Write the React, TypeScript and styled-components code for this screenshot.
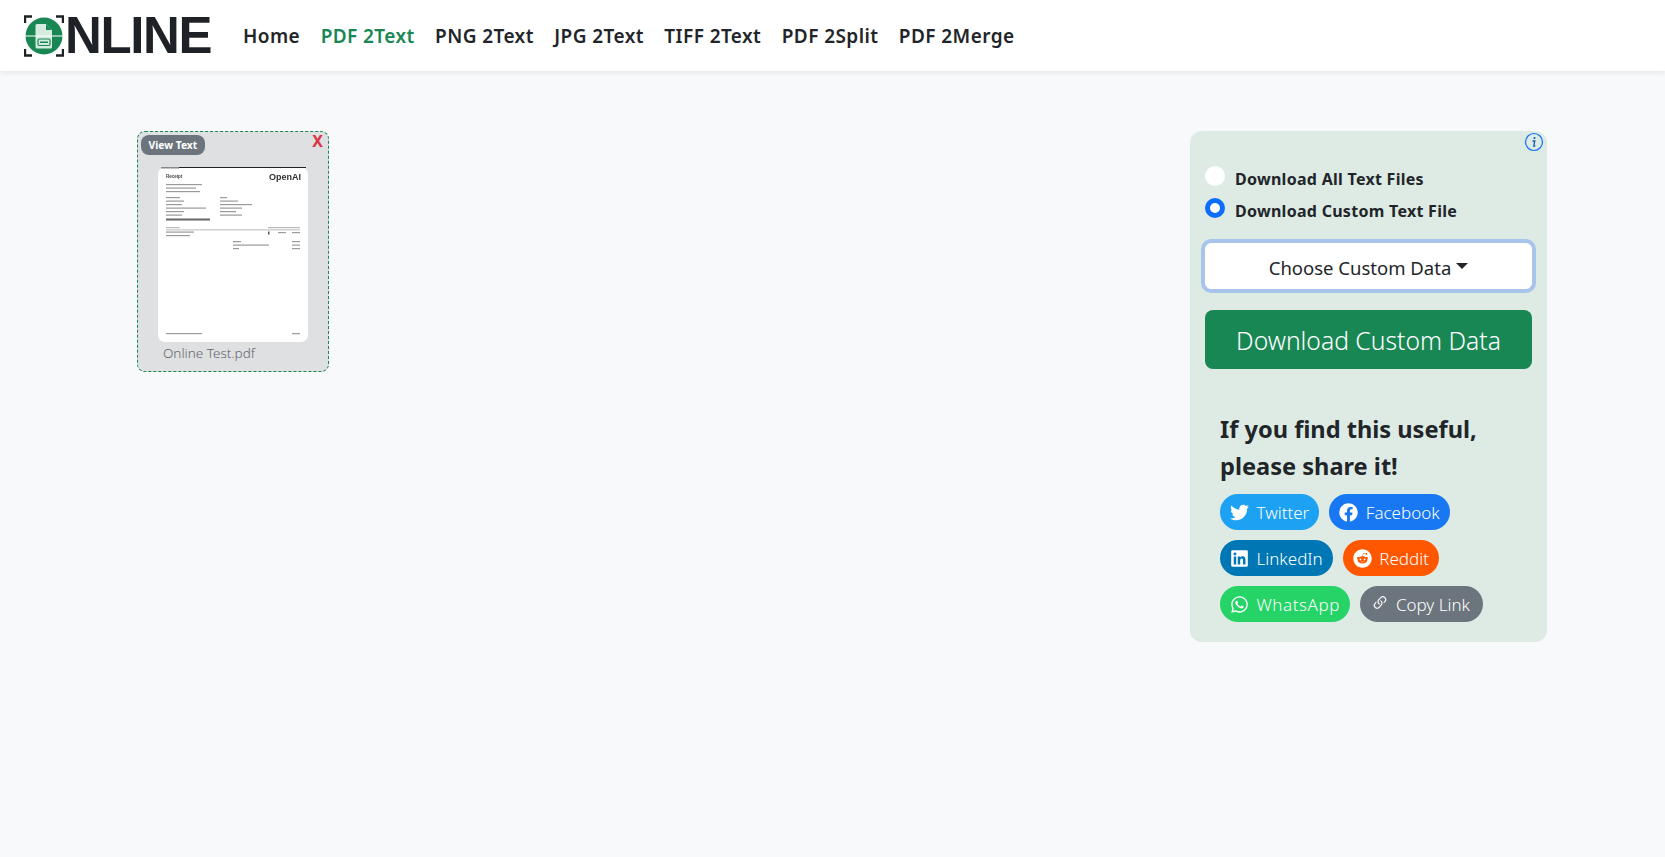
import React from 'react';
import styled, { createGlobalStyle } from 'styled-components';
import { FaTwitter, FaFacebook, FaLinkedin, FaReddit, FaWhatsapp } from 'react-icons/fa';
import { BsLink45Deg } from 'react-icons/bs';

const GlobalStyle = createGlobalStyle`
  html, body {
    margin: 0;
    height: 100%;
    background-color: #f8f9fa;
    font-family: "Noto Sans", "Open Sans", sans-serif;
    color: #212529;
  }
`;

const Navbar = styled.nav`
  display: flex;
  align-items: center;
  height: 71px;
  padding-left: 24px;
  background-color: #fff;
  box-shadow: 0 2px 5px rgba(0, 0, 0, 0.08);
`;

const Logo = styled.div`
  display: flex;
  align-items: center;
  width: 219px;
`;

const LogoText = styled.span`
  font-family: "Liberation Sans", sans-serif;
  font-weight: 700;
  font-size: 51px;
  line-height: 1;
  letter-spacing: -1.400px;
  color: #1e2126;
  margin-left: 1px;
`;

const NavLink = styled.a<{ $active?: boolean }>`
  font-size: 19px;
  font-weight: 600;
  letter-spacing: 0.42px;
  margin-right: 20.500px;
  color: ${(props) => (props.$active ? '#198754' : '#212529')};
`;

const Main = styled.main`
  display: flex;
  justify-content: space-between;
  align-items: flex-start;
  padding: 60px 118px 0 137px;
`;

const FileCard = styled.div`
  position: relative;
  box-sizing: border-box;
  width: 192px;
  height: 241px;
  padding-top: 35px;
  border: 1px dashed #198754;
  border-radius: 8px;
  background-color: #dee0e2;
  display: flex;
  flex-direction: column;
  align-items: center;
`;

const ViewBadge = styled.span`
  position: absolute;
  top: 3px;
  left: 3px;
  padding: 0 7.500px;
  height: 20px;
  line-height: 20px;
  border-radius: 8px;
  background-color: #6c757d;
  color: #fff;
  font-size: 10.300px;
  font-weight: 700;
`;

const CloseMark = styled.span`
  position: absolute;
  top: -2px;
  right: 5px;
  color: #dc3545;
  font-size: 16px;
  font-weight: 700;
`;

const Thumb = styled.svg`
  display: block;
  width: 150px;
  height: 175px;
  filter: blur(0.3px);
`;

const FileName = styled.div`
  align-self: flex-start;
  margin: 2px 0 0 25px;
  font-size: 13.500px;
  font-weight: 300;
  color: #5f666d;
`;

const Panel = styled.aside`
  position: relative;
  box-sizing: border-box;
  width: 357px;
  height: 511px;
  padding: 32px 15px 0;
  border-radius: 12px;
  background-color: #deebe4;
`;

const InfoIcon = styled.svg`
  position: absolute;
  top: 1px;
  right: 3px;
  width: 20px;
  height: 20px;
`;

const RadioRow = styled.label`
  display: flex;
  align-items: center;
  height: 32px;
  font-size: 16px;
  font-weight: 700;
  letter-spacing: 0.28px;
`;

const RadioDot = styled.span<{ $checked?: boolean }>`
  box-sizing: border-box;
  width: 20px;
  height: 20px;
  margin: -6px 10px 0 0;
  border-radius: 50%;
  background-color: #fff;
  border: ${(props) => (props.$checked ? '5px solid #0d6efd' : 'none')};
`;

const Dropdown = styled.button`
  display: flex;
  align-items: center;
  justify-content: center;
  box-sizing: border-box;
  width: 100%;
  height: 46px;
  margin-top: 16px;
  padding-top: 3px;
  border: 1px solid #fff;
  border-radius: 6px;
  background-color: #fff;
  box-shadow: 0 0 0 4px #a8c4ea;
  font-family: inherit;
  font-size: 18.500px;
  font-weight: 400;
  color: #212529;
`;

const Caret = styled.span`
  width: 0;
  height: 0;
  margin: -3px 0 0 5px;
  border-top: 6px solid #212529;
  border-left: 6px solid transparent;
  border-right: 6px solid transparent;
`;

const DownloadButton = styled.button`
  display: block;
  width: 100%;
  height: 59px;
  margin-top: 21px;
  padding-top: 2px;
  border: none;
  border-radius: 8px;
  background-color: #198754;
  color: #fff;
  font-family: inherit;
  font-size: 24.700px;
  font-weight: 300;
`;

const Share = styled.section`
  padding: 42px 15px 0;
`;

const ShareTitle = styled.h2`
  margin: 0 0 9px;
  font-size: 23.600px;
  font-weight: 700;
  line-height: 37px;
  color: #212529;
`;

const ShareList = styled.div`
  display: flex;
  flex-wrap: wrap;
  gap: 10px;
`;

const ShareButton = styled.a<{ $color: string; $tracking?: number }>`
  display: inline-flex;
  align-items: center;
  gap: 7.500px;
  height: 36px;
  padding: 0 10px;
  border-radius: 18px;
  background-color: ${(props) => props.$color};
  color: #fff;
  font-size: 17px;
  font-weight: 300;
  letter-spacing: ${(props) => props.$tracking ?? 0}px;
  white-space: nowrap;
  svg {
    width: 19px;
    height: 19px;
    flex: none;
  }
`;

const CopyButton = styled(ShareButton)`
  gap: 7px;
  padding: 0 13px 0 11px;
  svg {
    width: 18px;
    height: 18px;
    margin-top: -3px;
  }
`;

const Bar: React.FC<{ x: number; y: number; w: number; c?: string }> = ({ x, y, w, c = '#9a9a9a' }) => (
  <rect x={x} y={y} width={w} height="1.2" fill={c} />
);

const LogoMark = () => (
  <svg width="40" height="42" viewBox="0 0 40 42">
    <path d="M1 8V1.500h7M32 1.500h7V8M1 34v6.500h7M39 34v6.500h-7" fill="none" stroke="#1e2126" strokeWidth="2.400" />
    <circle cx="20" cy="21" r="18.500" fill="#198754" />
    <path d="M13 9h9l6 6v17a1.500 1.500 0 0 1-1.500 1.500h-13.500a1.500 1.500 0 0 1-1.500-1.500V10.500a1.500 1.500 0 0 1 1.500-1.500z" fill="#d6ebe0" />
    <path d="M22 9v6h6z" fill="#198754" />
    <rect x="14" y="24" width="12" height="6.500" rx="1.200" fill="none" stroke="#198754" strokeWidth="1.200" />
    <rect x="16" y="26.500" width="8" height="1.500" fill="#198754" />
    <rect x="1" y="20.500" width="38" height="1" fill="#fff" />
  </svg>
);

const ReceiptThumb = () => (
  <Thumb viewBox="0 0 150 175">
    <rect width="150" height="175" rx="7" fill="#fff" />
    <rect x="3" y="0" width="145" height="1" fill="#222" />
    <rect x="3" y="0" width="18" height="1.500" fill="#888" />
    <text x="8" y="11" fontFamily="Liberation Sans" fontSize="4.500" fontWeight="700" fill="#444">Receipt</text>
    <text x="111" y="13" fontFamily="Liberation Sans" fontSize="9" fontWeight="700" fill="#333">OpenAI</text>
    <Bar x={8} y={17} w={36} />
    <Bar x={8} y={20.500} w={30} />
    <Bar x={8} y={24} w={34} />
    <Bar x={8} y={30} w={14} />
    <Bar x={8} y={33.500} w={18} />
    <Bar x={8} y={37} w={16} />
    <Bar x={8} y={40.500} w={40} />
    <Bar x={8} y={44} w={18} />
    <Bar x={8} y={47.500} w={16} />
    <Bar x={62} y={30} w={7} />
    <Bar x={62} y={33.500} w={18} />
    <Bar x={62} y={37} w={32} />
    <Bar x={62} y={40.500} w={22} />
    <Bar x={62} y={44} w={16} />
    <Bar x={62} y={47.500} w={22} />
    <rect x="8" y="51.500" width="44" height="2" fill="#666" />
    <Bar x={8} y={60} w={14} c="#bbb" />
    <Bar x={110} y={60} w={32} c="#bbb" />
    <rect x="8" y="62.500" width="134" height="0.800" fill="#aaa" />
    <Bar x={8} y={64.500} w={28} />
    <rect x="110" y="64.500" width="1.500" height="3" fill="#555" />
    <Bar x={120} y={65} w={8} />
    <Bar x={134} y={65} w={8} />
    <Bar x={8} y={68} w={24} />
    <Bar x={75} y={74} w={8} />
    <Bar x={134} y={74} w={8} />
    <Bar x={75} y={77.500} w={36} />
    <Bar x={134} y={77.500} w={8} />
    <Bar x={75} y={81} w={6} />
    <Bar x={134} y={81} w={8} />
    <Bar x={8} y={166} w={36} />
    <Bar x={134} y={166} w={8} />
  </Thumb>
);

const App: React.FC = () => (
  <>
    <GlobalStyle />
    <Navbar>
      <Logo>
        <LogoMark />
        <LogoText>NLINE</LogoText>
      </Logo>
      <NavLink>Home</NavLink>
      <NavLink $active>PDF 2Text</NavLink>
      <NavLink>PNG 2Text</NavLink>
      <NavLink>JPG 2Text</NavLink>
      <NavLink>TIFF 2Text</NavLink>
      <NavLink>PDF 2Split</NavLink>
      <NavLink>PDF 2Merge</NavLink>
    </Navbar>
    <Main>
      <FileCard>
        <ViewBadge>View Text</ViewBadge>
        <CloseMark>X</CloseMark>
        <ReceiptThumb />
        <FileName>Online Test.pdf</FileName>
      </FileCard>
      <Panel>
        <InfoIcon viewBox="0 0 20 20">
          <circle cx="10" cy="10" r="8.500" fill="none" stroke="#0d6efd" strokeWidth="1.200" />
          <circle cx="10.500" cy="6" r="1.100" fill="#0d5fb5" />
          <path d="M8.500 9h2.300l-1 5h1.500" fill="none" stroke="#0d5fb5" strokeWidth="1.300" />
        </InfoIcon>
        <RadioRow>
          <RadioDot />
          Download All Text Files
        </RadioRow>
        <RadioRow>
          <RadioDot $checked />
          Download Custom Text File
        </RadioRow>
        <Dropdown>
          Choose Custom Data
          <Caret />
        </Dropdown>
        <DownloadButton>Download Custom Data</DownloadButton>
        <Share>
          <ShareTitle>If you find this useful, please share it!</ShareTitle>
          <ShareList>
            <ShareButton $color="#1da1f2"><FaTwitter />Twitter</ShareButton>
            <ShareButton $color="#1877f2"><FaFacebook />Facebook</ShareButton>
            <ShareButton $color="#0077b5"><FaLinkedin />LinkedIn</ShareButton>
            <ShareButton $color="#ff5700"><FaReddit />Reddit</ShareButton>
            <ShareButton $color="#25d366" $tracking={0.55}><FaWhatsapp />WhatsApp</ShareButton>
            <CopyButton $color="#6c757d"><BsLink45Deg />Copy Link</CopyButton>
          </ShareList>
        </Share>
      </Panel>
    </Main>
  </>
);

export default App;
